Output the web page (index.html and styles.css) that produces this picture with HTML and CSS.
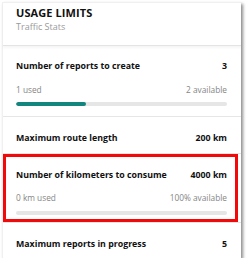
FILE: index.html
```html
<!DOCTYPE html>
<html>
<head>
<meta charset="utf-8">
<link rel="stylesheet" href="styles.css">
</head>
<body>
<div class="card">
  <div class="header">
    <div class="h-title">USAGE LIMITS</div>
    <div class="h-sub">Traffic Stats</div>
  </div>
  <div class="section first">
    <div class="row title"><span>Number of reports to create</span><span>3</span></div>
    <div class="row meta"><span>1 used</span><span>2 available</span></div>
    <div class="track"><div class="fill" style="width:33.3%"></div></div>
  </div>
  <div class="section second">
    <div class="row title"><span>Maximum route length</span><span>200 km</span></div>
  </div>
  <div class="section highlighted">
    <div class="row title"><span>Number of kilometers to consume</span><span>4000 km</span></div>
    <div class="row meta"><span>0 km used</span><span>100% available</span></div>
    <div class="track"><div class="fill" style="width:0%"></div></div>
    <div class="outline"></div>
  </div>
  <div class="section last">
    <div class="row title"><span>Maximum reports in progress</span><span>5</span></div>
  </div>
</div>
</body>
</html>
```
FILE: styles.css
```css
html, body {
  margin: 0;
  padding: 0;
  background: #ffffff;
}
body {
  padding: 2px 0 0 2px;
  font-family: "Open Sans", "DejaVu Sans", sans-serif;
}
.card {
  width: 239px;
  background: #ffffff;
  border-top: 1px solid #f0f0f0;
  border-left: 1px solid #f0f0f0;
  box-sizing: border-box;
  box-shadow: 2px 2px 3px rgba(0, 0, 0, 0.45);
}
.header {
  padding: 3px 14px 0 13px;
  height: 43px;
  box-sizing: border-box;
  border-bottom: 1px solid #e4e4e4;
  box-shadow: 0 2px 2px rgba(0, 0, 0, 0.04);
}
.h-title {
  font-size: 11px;
  font-weight: 700;
  color: #111;
  line-height: 14px;
  letter-spacing: 0.1px;
}
.h-sub {
  font-size: 9px;
  color: #9a9a9a;
  line-height: 12px;
  margin-top: 1px;
}
.section {
  position: relative;
  padding: 16px 14px 10px 13px;
  border-bottom: 1px solid #e6e6e6;
}
.section.first {
  padding-top: 15px;
}
.section.first .meta {
  margin-top: 13px;
}
.section.second {
  padding-bottom: 9px;
}
.section.highlighted {
  padding-bottom: 7px;
}
.section.last {
  padding-bottom: 8px;
  border-bottom: none;
}
.row {
  display: flex;
  justify-content: space-between;
  align-items: center;
}
.title {
  font-size: 8.8px;
  font-weight: 700;
  color: #111;
  line-height: 11px;
}
.meta {
  font-size: 8.3px;
  color: #858585;
  line-height: 10px;
  margin-top: 12px;
}
.track {
  margin-top: 7px;
  height: 4px;
  border-radius: 2px;
  background: #e6e6e6;
  overflow: hidden;
}
.highlighted .track {
  margin-top: 8px;
}
.fill {
  height: 100%;
  background: #12857f;
  border-radius: 2px;
}
.outline {
  position: absolute;
  left: 0;
  top: 0;
  right: 3px;
  bottom: 0;
  border: 3px solid #f20a0a;
  pointer-events: none;
}
```
